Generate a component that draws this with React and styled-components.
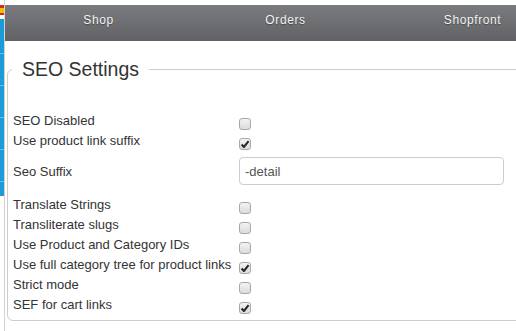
import React from 'react';
import styled, { createGlobalStyle } from 'styled-components';

const Global = createGlobalStyle`
  html, body { margin: 0; padding: 0; background: #fff; overflow: hidden; }
  body { font-family: "Liberation Sans", Arial, sans-serif; color: #333; }
  * { box-sizing: border-box; }
`;

const Page = styled.div`
  display: flex;
  width: 580px;
  height: 331px;
`;

const Sidebar = styled.aside`
  flex: none;
  width: 4px;
  display: flex;
  flex-direction: column;
`;

const Stripe = styled.div`
  flex: none;
  height: ${(p) => p.$h}px;
  background: ${(p) => p.$color};
`;

const MenuStrip = styled.div`
  flex: none;
  height: 177px;
  background: repeating-linear-gradient(to bottom, #1d9bd8 0 31px, #63bde9 31px 32px);
  background-position: 0 3px;
`;

const Main = styled.main`
  flex: 1;
  border-left: 1px solid #d2d2d2;
  padding-top: 5px;
  min-width: 0;
`;

const Nav = styled.nav`
  display: flex;
  height: 36px;
  background: linear-gradient(to bottom, #7a7b7e, #616265);
  overflow: hidden;
`;

const NavItem = styled.a`
  flex: none;
  width: 187px;
  text-align: center;
  line-height: 30px;
  font-size: 12px;
  letter-spacing: 0.6px;
  color: #f2f2f2;
  text-shadow: 0 1px 1px rgba(0, 0, 0, 0.35);
  text-decoration: none;
`;

const Fieldset = styled.fieldset`
  margin: 17px 0 0 2px;
  padding: 30px 0 5px 4px;
  border: 1px solid #cdcdcd;
  border-radius: 6px;
  min-width: 0;
`;

const Legend = styled.legend`
  padding: 0 10px;
  font-size: 19.5px;
  line-height: 23px;
  color: #333;
`;

const Row = styled.div`
  display: grid;
  grid-template-columns: 226px auto;
  align-items: ${(p) => (p.$field ? 'center' : 'start')};
  padding: ${(p) => (p.$field ? '6px 0 10px 1px' : '0 0 0 1px')};
`;

const Label = styled.label`
  font-size: 13px;
  line-height: 20px;
  color: #333;
  white-space: nowrap;
  margin-top: ${(p) => (p.$field ? '2px' : '0')};
`;

const Box = styled.span`
  display: flex;
  align-items: center;
  justify-content: center;
  width: 12px;
  height: 12px;
  margin-top: 7px;
  border: 1px solid #a8a8a8;
  border-radius: 3px;
  background: linear-gradient(to bottom, #f2f2f2, #dcdcdc);
`;

const TextInput = styled.input`
  width: 265px;
  height: 28px;
  border: 1px solid #cccccc;
  border-radius: 4px;
  padding: 0 5px;
  font-family: "Liberation Sans", Arial, sans-serif;
  font-size: 13px;
  color: #555;
  outline: none;
`;

const Check = ({ checked }) => (
  <Box role="checkbox" aria-checked={checked}>
    {checked && (
      <svg width="10" height="10" viewBox="0 0 10 10">
        <path d="M1.6 5.6 L3.9 8 L8.6 2.2" fill="none" stroke="#2a2a2a" strokeWidth="2.1" strokeLinejoin="round" />
      </svg>
    )}
  </Box>
);

const before = [
  { label: 'SEO Disabled', checked: false },
  { label: 'Use product link suffix', checked: true },
];

const after = [
  { label: 'Translate Strings', checked: false },
  { label: 'Transliterate slugs', checked: false },
  { label: 'Use Product and Category IDs', checked: false },
  { label: 'Use full category tree for product links', checked: true },
  { label: 'Strict mode', checked: false },
  { label: 'SEF for cart links', checked: true },
];

export default function App() {
  return (
    <>
      <Global />
      <Page>
        <Sidebar>
          <Stripe $h={5} $color="#ffffff" />
          <Stripe $h={3} $color="#d62a1f" />
          <Stripe $h={5} $color="#f2c000" />
          <Stripe $h={2} $color="#d62a1f" />
          <Stripe $h={4} $color="#ffffff" />
          <MenuStrip />
        </Sidebar>
        <Main>
          <Nav>
            <NavItem href="#">Shop</NavItem>
            <NavItem href="#">Orders</NavItem>
            <NavItem href="#">Shopfront</NavItem>
          </Nav>
          <Fieldset>
            <Legend>SEO Settings</Legend>
            {before.map((r) => (
              <Row key={r.label}>
                <Label>{r.label}</Label>
                <Check checked={r.checked} />
              </Row>
            ))}
            <Row $field>
              <Label $field>Seo Suffix</Label>
              <TextInput defaultValue="-detail" />
            </Row>
            {after.map((r) => (
              <Row key={r.label}>
                <Label>{r.label}</Label>
                <Check checked={r.checked} />
              </Row>
            ))}
          </Fieldset>
        </Main>
      </Page>
    </>
  );
}
